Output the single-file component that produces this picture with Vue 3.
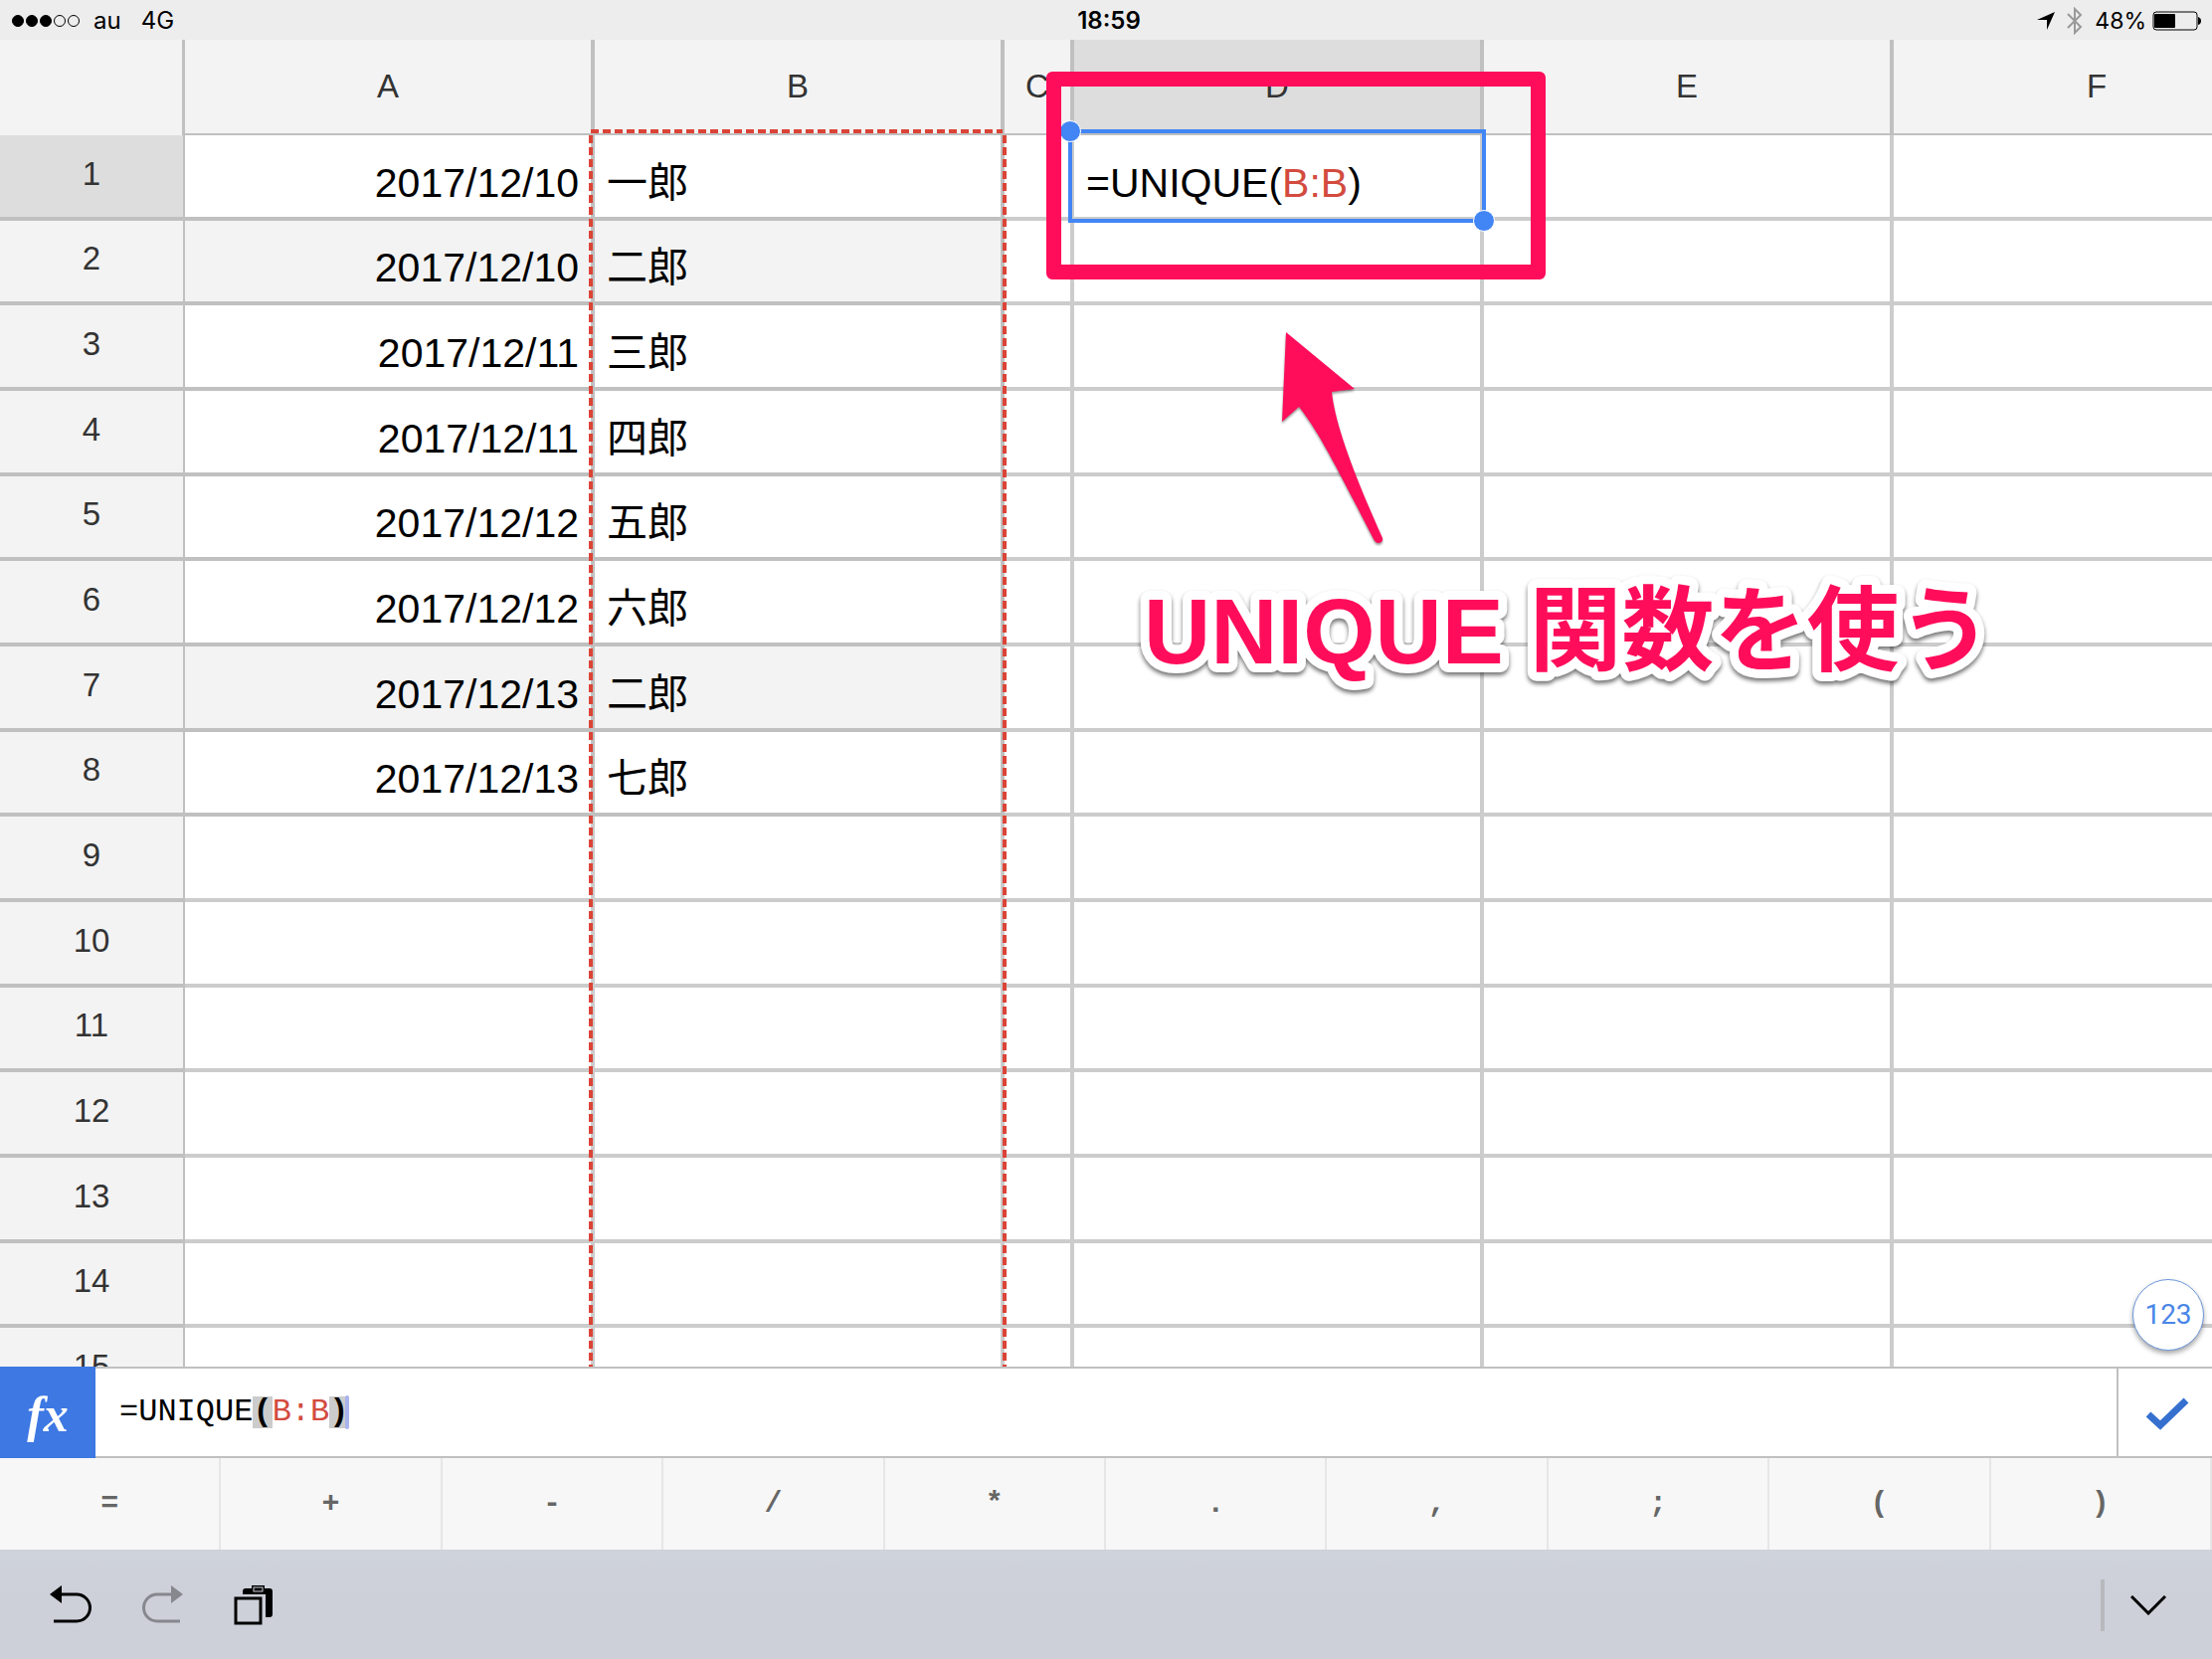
<script setup>
import { ref } from 'vue'

const columns = [
  { name: 'A', kind: 'wide' },
  { name: 'B', kind: 'wide' },
  { name: 'C', kind: 'narrow' },
  { name: 'D', kind: 'wide', active: true },
  { name: 'E', kind: 'wide' },
  { name: 'F', kind: 'wide' },
]

const entries = [
  ['2017/12/10', '一郎'],
  ['2017/12/10', '二郎', true],
  ['2017/12/11', '三郎'],
  ['2017/12/11', '四郎'],
  ['2017/12/12', '五郎'],
  ['2017/12/12', '六郎'],
  ['2017/12/13', '二郎', true],
  ['2017/12/13', '七郎'],
]

const rows = Array.from({ length: 15 }, (_, i) => ({
  number: i + 1,
  date: entries[i]?.[0] ?? '',
  name: entries[i]?.[1] ?? '',
  shaded: entries[i]?.[2] ?? false,
}))

const keys = ['=', '+', '-', '/', '*', '.', ',', ';', '(', ')']
const formula = ref('=UNIQUE(B:B)')
</script>

<template>
  <div class="app">
    <header class="status">
      <div class="status-side">
        <span class="signal">
          <i class="dot on"></i><i class="dot on"></i><i class="dot on"></i><i class="dot"></i><i class="dot"></i>
        </span>
        <span class="carrier">au</span>
        <span>4G</span>
      </div>
      <time class="clock">18:59</time>
      <div class="status-side status-right">
        <svg width="18" height="18" viewBox="0 0 18 18"><path d="M0 8 18 0 10 18V8Z" /></svg>
        <svg class="bluetooth" width="16" height="28" viewBox="0 0 16 28">
          <path d="M1 7 14 20 8 26V2L14 8 1 21" />
        </svg>
        <span class="percent">48%</span>
        <svg width="50" height="20" viewBox="0 0 50 20">
          <rect x="1" y="1" width="44" height="18" rx="3" fill="none" stroke="#000" />
          <rect x="2" y="3" width="21" height="14" rx="1" />
          <path d="M46 6Q49 7 49 10T46 14Z" />
        </svg>
      </div>
    </header>

    <main class="sheet">
      <table class="grid">
        <colgroup>
          <col class="col-index" />
          <col v-for="c in columns" :key="c.name" :class="'col-' + c.kind" />
        </colgroup>
        <thead>
          <tr>
            <td class="corner"></td>
            <th v-for="c in columns" :key="c.name" scope="col" :class="{ active: c.active }">{{ c.name }}</th>
          </tr>
        </thead>
        <tbody>
          <tr v-for="r in rows" :key="r.number" :class="{ filled: r.date, shaded: r.shaded }">
            <th scope="row" :class="{ active: r.number === 1 }">{{ r.number }}</th>
            <td class="data date">{{ r.date }}</td>
            <td class="data">{{ r.name }}</td>
            <td></td>
            <td><template v-if="r.number === 1">=UNIQUE(<span class="ref">B:B</span>)</template></td>
            <td></td>
            <td></td>
          </tr>
        </tbody>
      </table>

      <div class="range"></div>
      <div class="selection">
        <i class="handle start"></i>
        <i class="handle end"></i>
      </div>
      <div class="callout-box"></div>
      <svg class="callout-arrow" width="110" height="220" viewBox="0 0 110 220">
        <path
          d="M9 4 78 61 55 64C58 94 75 142 106 211Q107 215 102 216Q99 216 97 212C61 142 42 104 22 79L5 94Z"
        />
      </svg>
      <svg class="callout-text" width="880" height="120" viewBox="0 0 880 120">
        <text x="12" y="87">UNIQUE 関数を使う</text>
      </svg>
      <button class="numeric" type="button">123</button>
    </main>

    <section class="formula-bar">
      <span class="fx">fx</span>
      <div class="editor">
        <div class="tokens" aria-hidden="true">=UNIQUE<b>(</b><span class="ref">B:B</span><b>)</b><i class="caret"></i></div>
        <input v-model="formula" class="formula-input" type="text" aria-label="Formula" spellcheck="false" />
      </div>
      <button class="confirm" type="button" aria-label="Confirm">
        <svg width="44" height="34" viewBox="0 0 44 34"><path d="M3 17 15 28 41 3" /></svg>
      </button>
    </section>

    <nav class="keys">
      <button v-for="k in keys" :key="k" type="button">{{ k }}</button>
    </nav>

    <footer class="toolbar">
      <div class="tools">
        <button type="button" aria-label="Undo">
          <svg width="44" height="40" viewBox="0 0 44 40">
            <path class="line" d="M10 9H27A13 13 0 0 1 27 36H4" />
            <path d="M0 9 12 0V18Z" />
          </svg>
        </button>
        <button class="disabled" type="button" aria-label="Redo" disabled>
          <svg width="44" height="40" viewBox="0 0 44 40">
            <path class="line" d="M32 9H16A13 13 0 0 0 16 36H39" />
            <path d="M42 9 30 0V18Z" />
          </svg>
        </button>
        <button type="button" aria-label="Paste">
          <svg width="44" height="40" viewBox="0 0 44 40">
            <path d="M10 9V6Q10 3 13 3H19V0H32V3H37Q40 3 40 6V29Q40 32 37 32H33V9Z" />
            <rect class="slot" x="21" y="2" width="9" height="4" />
            <rect class="line" x="3" y="13" width="25" height="25" />
          </svg>
        </button>
      </div>
      <div class="dismiss">
        <button type="button" aria-label="Hide keyboard">
          <svg width="36" height="20" viewBox="0 0 36 20"><path class="line" d="M1 1 18 18 35 1" /></svg>
        </button>
      </div>
    </footer>
  </div>
</template>

<style>
body {
  margin: 0;
}
</style>

<style scoped>
.app {
  display: flex;
  flex-direction: column;
  height: 100vh;
  overflow: hidden;
  background: #fff;
  color: #000;
  font-family: "Liberation Sans", "Noto Sans CJK JP", sans-serif;
}
.app *,
.app *::before {
  box-sizing: border-box;
}
button {
  padding: 0;
  border: 0;
  background: none;
  font: inherit;
}
svg {
  display: block;
}

/* Status bar */
.status {
  display: flex;
  flex: none;
  align-items: center;
  height: 40px;
  padding: 2px 10px 0 12px;
  background: #ededed;
  font: 24px/38px Inter, sans-serif;
}
.status-side {
  display: flex;
  flex: 1;
  align-items: center;
}
.status-right {
  justify-content: flex-end;
}
.signal {
  display: flex;
  gap: 2px;
}
.dot {
  width: 12px;
  height: 12px;
  border: 1px solid #000;
  border-radius: 50%;
}
.dot.on {
  background: #000;
}
.carrier {
  margin: 0 20px 0 14px;
}
.clock {
  padding-left: 4px;
  font-weight: 600;
}
.bluetooth {
  margin: 0 12px;
  fill: none;
  stroke: #999;
  stroke-width: 2;
}
.percent {
  margin-right: 6px;
  font-size: 23px;
}

/* Spreadsheet */
.sheet {
  position: relative;
  flex: 1;
  min-height: 0;
  overflow: hidden;
}
.grid {
  width: 2316px;
  table-layout: fixed;
  border-collapse: separate;
  border-spacing: 0;
}
.col-index {
  width: 186px;
}
.col-wide {
  width: 412px;
}
.col-narrow {
  width: 70px;
}
.grid th {
  padding: 0;
  background: #f3f3f3;
  color: #333;
  font-size: 33px;
  font-weight: 400;
  line-height: 40px;
}
.grid thead th {
  height: 96px;
  border-right: 4px solid #c0c0c0;
  border-bottom: 2px solid #c0c0c0;
}
.grid .corner {
  height: 96px;
  border-right: 3px solid #c0c0c0;
  border-bottom: 0;
  background: #f3f3f3;
}
.grid tbody th {
  height: 86px;
  padding-bottom: 5px;
  border-right: 2px solid #c0c0c0;
  border-bottom: 4px solid #c0c0c0;
}
.grid tbody tr:nth-child(3n + 2) th {
  height: 85px;
}
.grid th.active {
  background: #ddd;
}
.grid td {
  padding: 13px 12px 0;
  border-right: 4px solid #ccc;
  border-bottom: 4px solid #ccc;
  font-size: 41px;
  line-height: 48px;
  white-space: nowrap;
}
.grid .date {
  text-align: right;
}
.filled .data {
  border-color: #c0c0c0;
}
.shaded .data {
  background: #f3f3f3;
}
.ref {
  color: #d34b3e;
}

/* Referenced range */
.range {
  position: absolute;
  top: 90px;
  bottom: 0;
  left: 592px;
  width: 420px;
  background:
    repeating-linear-gradient(90deg, #db4437 0 8px, transparent 8px 12px) 2px 0 / 414px 4px no-repeat,
    repeating-linear-gradient(180deg, #db4437 0 8px, transparent 8px 12px) 0 6px / 4px 100% no-repeat,
    repeating-linear-gradient(180deg, #db4437 0 8px, transparent 8px 12px) 416px 6px / 4px 100% no-repeat;
}
.selection {
  position: absolute;
  top: 90px;
  left: 1074px;
  width: 420px;
  height: 94px;
  border: 4px solid #4285f4;
}
.handle {
  position: absolute;
  width: 22px;
  height: 22px;
  border: 1px solid #fff;
  border-radius: 50%;
  background: #4285f4;
}
.handle.start {
  top: -13px;
  left: -13px;
}
.handle.end {
  right: -13px;
  bottom: -13px;
}

/* Annotations */
.callout-box {
  position: absolute;
  top: 32px;
  left: 1052px;
  width: 502px;
  height: 209px;
  border: 15px solid #ff0d5b;
  border-radius: 6px;
}
.callout-arrow {
  position: absolute;
  top: 290px;
  left: 1284px;
  fill: #ff0d5b;
  filter: drop-shadow(0 2px 1px rgba(0, 0, 0, 0.4));
}
.callout-text {
  position: absolute;
  top: 540px;
  left: 1138px;
  overflow: visible;
  filter: drop-shadow(0 3px 2px rgba(0, 0, 0, 0.55));
}
.callout-text text {
  fill: #ff0d5b;
  stroke: #fff;
  stroke-width: 18px;
  stroke-linejoin: round;
  paint-order: stroke;
  font-size: 93px;
  font-weight: 700;
}
.numeric {
  position: absolute;
  right: 8px;
  bottom: 16px;
  width: 72px;
  height: 72px;
  border: 1px solid #6c97dd;
  border-radius: 50%;
  background: #fff;
  box-shadow: 0 3px 5px rgba(0, 0, 0, 0.35);
  color: #4a86e8;
  font: 28px/32px Roboto, sans-serif;
}

/* Formula bar */
.formula-bar {
  display: flex;
  flex: none;
  height: 92px;
  border: solid #c0c0c0;
  border-width: 2px 0;
}
.fx {
  width: 96px;
  margin: -2px 0;
  background: #3d78e3;
  color: #fff;
  font: italic 700 50px/96px "Liberation Serif", serif;
  text-align: center;
}
.editor {
  display: grid;
  flex: 1;
}
.tokens,
.formula-input {
  grid-area: 1 / 1;
  padding: 0 0 0 24px;
  font: 32px/32px "Liberation Mono", monospace;
}
.tokens {
  display: flex;
  align-items: center;
}
.tokens b {
  background: #ccc;
}
.caret {
  width: 4px;
  height: 34px;
  margin-left: -3px;
  border-radius: 2px;
  background: #a9b4ee;
}
.formula-input {
  border: 0;
  outline: 0;
  background: transparent;
  color: transparent;
  caret-color: #a9b4ee;
}
.confirm {
  display: flex;
  align-items: center;
  justify-content: center;
  width: 96px;
  padding: 4px 0 0 4px;
  border-left: 2px solid #c0c0c0;
}
.confirm path {
  fill: none;
  stroke: #3670cf;
  stroke-width: 7;
}

/* Operator keys */
.keys {
  display: flex;
  flex: none;
  height: 92px;
}
.keys button {
  flex: 1;
  border-right: 2px solid #e6e6e6;
  background: #f7f7f7;
  color: #666;
  font: 700 30px/32px "Liberation Mono", monospace;
}

/* Keyboard toolbar */
.toolbar {
  display: flex;
  flex: none;
  align-items: center;
  justify-content: space-between;
  height: 110px;
  padding: 2px 46px 0 50px;
  background: linear-gradient(#cfd3da, #cdd0d9 40%);
}
.tools {
  display: flex;
  gap: 48px;
}
.tools .disabled {
  color: #86888e;
}
.toolbar button {
  color: #000;
}
.toolbar path {
  fill: currentColor;
}
.toolbar .line {
  fill: none;
  stroke: currentColor;
  stroke-width: 3;
}
.slot {
  fill: none;
  stroke: #cdd0d9;
}
.dismiss {
  display: flex;
  align-items: center;
  height: 52px;
  padding-left: 26px;
  border-left: 4px solid #b8b9bc;
}
</style>
